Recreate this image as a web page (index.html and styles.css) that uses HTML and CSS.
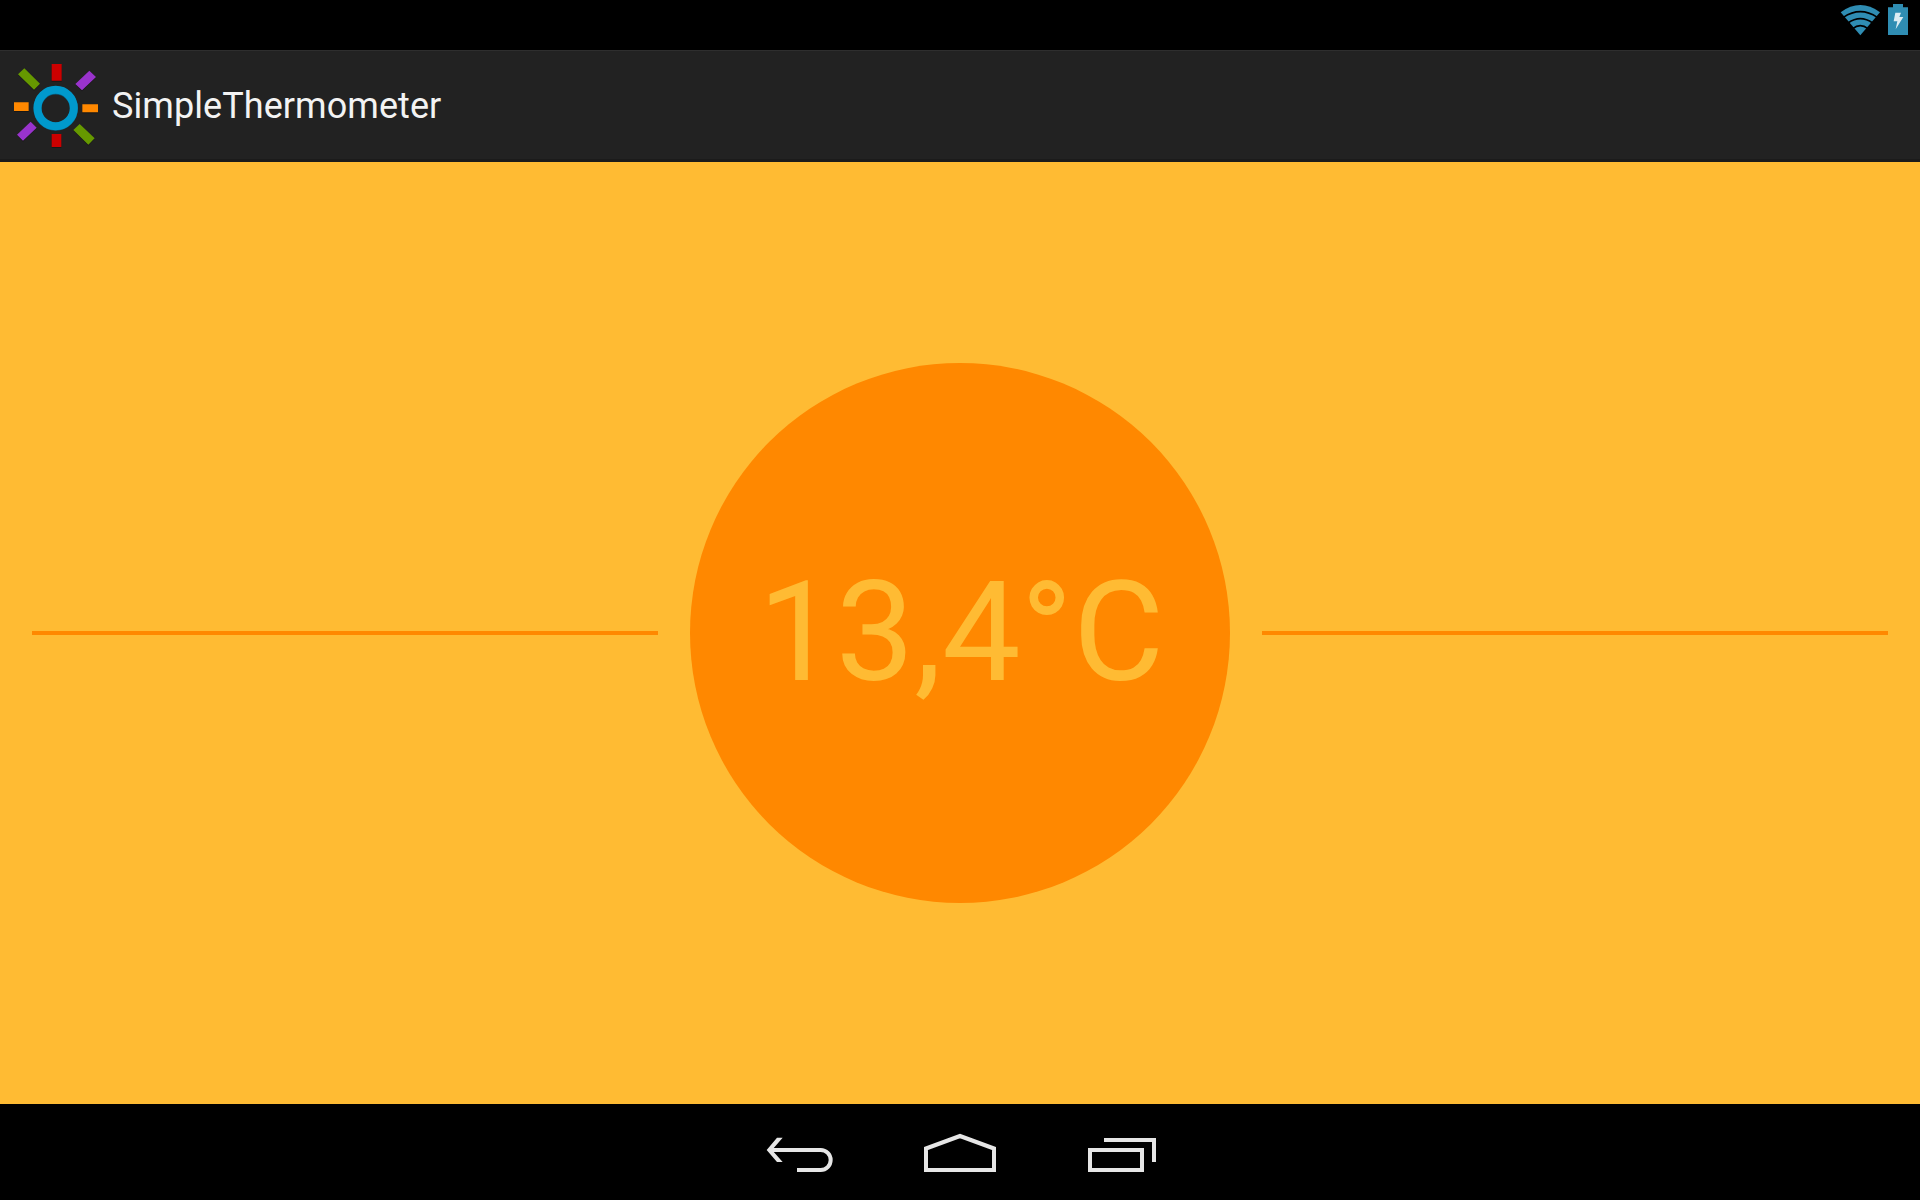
FILE: index.html
```html
<!DOCTYPE html>
<html lang="en">
<head>
<meta charset="utf-8">
<title>SimpleThermometer</title>
<link rel="stylesheet" href="styles.css">
</head>
<body>
<div class="screen">
  <div class="status-bar">
    <svg class="status-icons" viewBox="0 0 300 150" aria-hidden="true">
      <g class="wifi">
        <path d="M62 36.500Q121 -6.500 180 36.500L121 106Z"/>
        <path class="wifi-gap" d="M70 52Q121 18 172 52M84 69Q121 43 158 69M98 86Q121 68 144 86"/>
      </g>
      <path class="battery" d="M219 12H249V22H264V105H204V22H219Z"/>
      <path class="bolt" d="M226 38H243L238 51H250L227 88L232 64H221Z"/>
    </svg>
  </div>
  <header class="action-bar">
    <svg class="app-icon" viewBox="0 30 336 336" aria-hidden="true">
      <g class="icon-shadow" transform="translate(0 2)">
        <path d="M155 72H185V123H155ZM155 282H184V322H155ZM42 186H86V214H42ZM247 192H294V218H247ZM54 103L73 84L120 131L102 150ZM220 270L239 252L284 295L265 315ZM226 132L268 92L288 111L246 152ZM51 284L92 245L110 263L69 303Z"/>
      </g>
      <path class="red" d="M155 72H185V122H155ZM155 282H184V321H155Z"/>
      <path class="orange" d="M42 187H86V213H42ZM247 193H294V217H247Z"/>
      <path class="green" d="M54 103L73 85L120 131L102 149ZM220 270L239 252L284 295L265 314Z"/>
      <path class="purple" d="M226 132L268 92L288 111L246 151ZM51 284L92 245L110 263L69 302Z"/>
      <circle class="ring-shadow" cx="167" cy="206" r="54.500"/>
      <circle class="ring" cx="167" cy="204" r="54.500"/>
    </svg>
    <h1 class="title">SimpleThermometer</h1>
  </header>
  <main class="content">
    <div class="rule"></div>
    <div class="dial"><span class="reading"><span class="lead">1</span>3,4°C</span></div>
    <div class="rule"></div>
  </main>
  <nav class="nav-bar">
    <svg class="nav-icon" viewBox="-90 27 480 288" role="img" aria-label="Back">
      <path class="fill" d="M81 128H98L66 165L98 201H81L50 165Z"/>
      <path class="stroke" d="M60 165H212A30 30 0 0 1 212 225H141"/>
    </svg>
    <svg class="nav-icon" viewBox="-60 27 480 288" role="img" aria-label="Home">
      <path class="stroke" d="M78 225V160.500L180 123L282 160.500V225Z"/>
    </svg>
    <svg class="nav-icon" viewBox="420 27 480 288" role="img" aria-label="Recent apps">
      <path class="stroke" d="M570 165H726V225H570ZM612 135H762V201"/>
    </svg>
  </nav>
</div>
</body>
</html>
```
FILE: styles.css
```css
body {
  margin: 0;
  background: #000;
  font-family: Roboto, "Liberation Sans", sans-serif;
}

.screen {
  display: flex;
  flex-direction: column;
  height: 1200px;
  overflow: hidden;
}

.status-bar {
  display: flex;
  justify-content: flex-end;
  height: 50px;
  background: #000;
}

.status-icons {
  width: 100px;
  height: 50px;
}

.wifi,
.battery {
  fill: #2f8db3;
}

.wifi-gap {
  fill: none;
  stroke: #000;
  stroke-width: 5;
}

.bolt {
  fill: #dcecf3;
}

.action-bar {
  display: flex;
  align-items: center;
  box-sizing: border-box;
  height: 112px;
  background: #222;
  box-shadow: inset 0 1px #2e2e2e, inset 0 -3px #1b1b1b;
}

.app-icon {
  width: 112px;
  height: 112px;
}

.red { fill: #c00; }
.orange { fill: #f80; }
.green { fill: #690; }
.purple { fill: #93c; }

.icon-shadow {
  fill: #111;
  fill-opacity: 0.6;
}

.ring,
.ring-shadow {
  fill: none;
  stroke: #09c;
  stroke-width: 24;
}

.ring-shadow {
  stroke: #075f80;
}

.title {
  margin: 0;
  color: #f3f3f3;
  font-size: 36px;
  font-weight: 400;
  letter-spacing: 0.07px;
  line-height: 42px;
}

.content {
  display: flex;
  flex: 1;
  align-items: center;
  gap: 32px;
  padding: 0 32px;
  background: #fb3;
}

.rule {
  flex: 1;
  height: 4px;
  background: #f80;
}

.dial {
  display: flex;
  align-items: center;
  justify-content: center;
  width: 540px;
  height: 540px;
  border-radius: 50%;
  background: #f80;
}

.reading {
  padding: 0 0 2px 2px;
  color: #fb3;
  font-size: 140px;
  line-height: 164px;
  white-space: nowrap;
}

.lead {
  letter-spacing: -1px;
}

.nav-bar {
  display: flex;
  justify-content: center;
  height: 96px;
  background: #000;
}

.nav-icon {
  width: 160px;
  height: 96px;
}

.fill {
  fill: #e6e6e6;
}

.stroke {
  fill: none;
  stroke: #e6e6e6;
  stroke-width: 12;
}
```
